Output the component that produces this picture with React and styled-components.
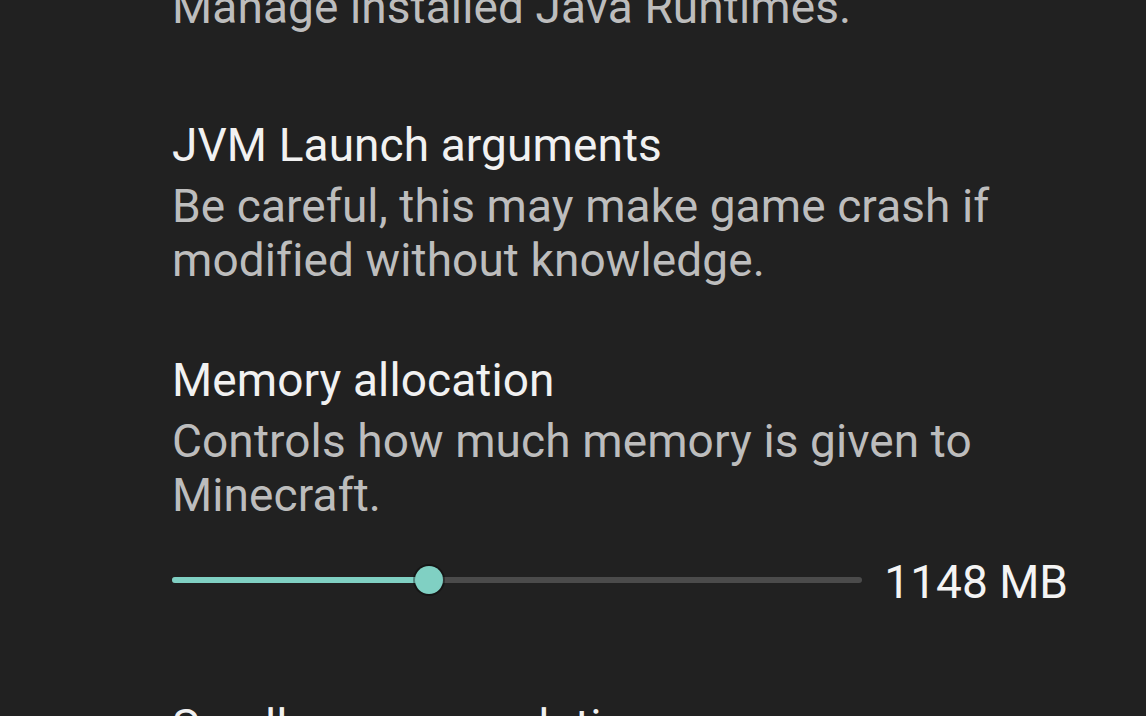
import styled, { createGlobalStyle } from "styled-components";

const GlobalStyle = createGlobalStyle`
  html, body {
    margin: 0;
    padding: 0;
    background: #212121;
    overflow: hidden;
  }
  body {
    font-family: Roboto, "Noto Sans", sans-serif;
    -webkit-font-smoothing: antialiased;
  }
`;

const Screen = styled.div`
  width: 1146px;
  height: 716px;
  overflow: hidden;
  background: #212121;
`;

const List = styled.div`
  display: flex;
  flex-direction: column;
  padding: 0 78px 0 172px;
  margin-top: -27px;
`;

const Pref = styled.div`
  display: flex;
  flex-direction: column;
  padding-top: ${(p) => p.$top || 0}px;
`;

const Title = styled.div`
  font-size: 46px;
  line-height: 54px;
  color: #f1f1f1;
  letter-spacing: 0.1px;
`;

const Summary = styled.div`
  font-size: 46px;
  line-height: 54px;
  color: #bdbdbd;
  margin-top: 7px;
  letter-spacing: 0.1px;
`;

const SliderRow = styled.div`
  display: flex;
  align-items: center;
  gap: 22px;
  margin-top: 33px;
  height: 54px;
`;

const Track = styled.div`
  position: relative;
  flex: 1;
  height: 6px;
  border-radius: 3px;
  background: #4b4b4b;
  margin-top: -4px;
`;

const Fill = styled.div`
  height: 100%;
  border-radius: 3px;
  background: #80d0c3;
`;

const Thumb = styled.div`
  position: absolute;
  top: 50%;
  width: 28px;
  height: 28px;
  border-radius: 50%;
  background: #80d0c3;
  transform: translate(-50%, -50%);
  box-shadow: 0 0 0 2px rgba(0, 0, 0, 0.35);
`;

const Value = styled.div`
  font-size: 46px;
  line-height: 54px;
  color: #f4f4f4;
  white-space: nowrap;
`;

function MemorySlider({ value, max }) {
  const pct = (value / max) * 100;
  return (
    <SliderRow>
      <Track>
        <Fill style={{ width: `${pct}%` }} />
        <Thumb style={{ left: `${pct}%` }} />
      </Track>
      <Value>{value} MB</Value>
    </SliderRow>
  );
}

export default function App() {
  return (
    <Screen>
      <GlobalStyle />
      <List>
        <Pref>
          <Summary>Manage installed Java Runtimes.</Summary>
        </Pref>
        <Pref $top={84}>
          <Title>JVM Launch arguments</Title>
          <Summary>
            Be careful, this may make game crash if
            <br />
            modified without knowledge.
          </Summary>
        </Pref>
        <Pref $top={66}>
          <Title>Memory allocation</Title>
          <Summary>
            Controls how much memory is given to
            <br />
            Minecraft.
          </Summary>
          <MemorySlider value={1148} max={3078} />
        </Pref>
        <Pref $top={90}>
          <Title>Small screen resolution</Title>
        </Pref>
      </List>
    </Screen>
  );
}
